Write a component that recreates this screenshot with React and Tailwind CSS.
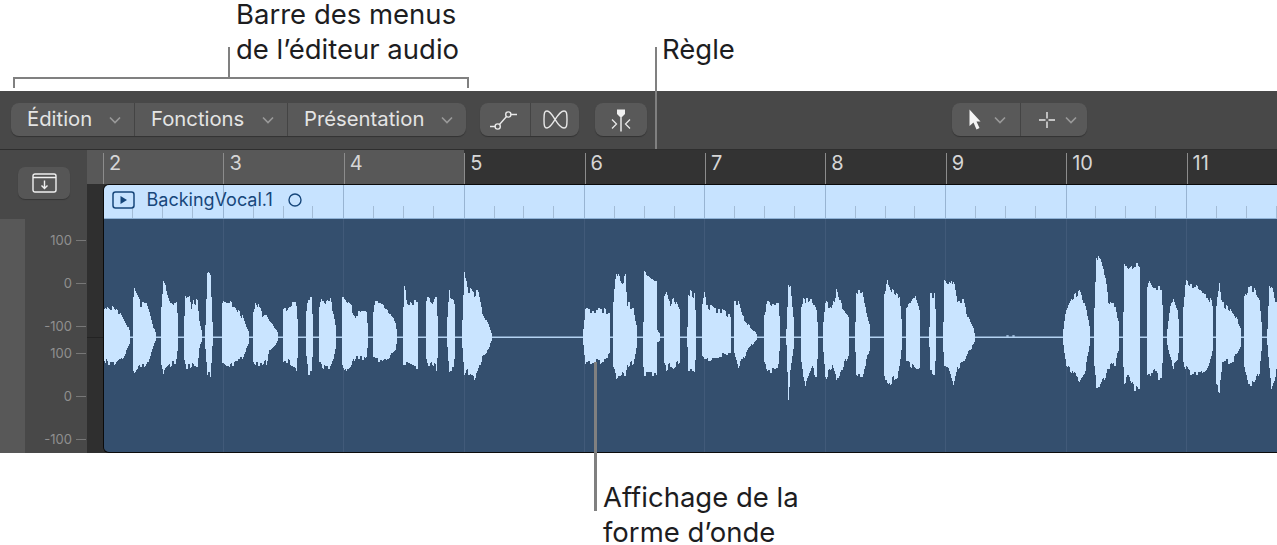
import React from "react";

const BLOBS = [
  [[104,27,22],[107,31,26],[113,28,26],[117,24,24],[120,24,22],[124,18,18],[127,12,12],[130,5,4]],
  [[133,40,34],[134,48,35],[137,40,33],[140,33,31],[146,32,28],[150,20,18],[153,10,8],[156,2,2]],
  [[161,30,28],[163,55,37],[166,48,30],[170,34,27],[176,32,25],[178,10,8]],
  [[184,20,25],[185,40,29],[189,42,30],[191,28,28],[193,36,30],[197,34,30],[199,15,10],[202,3,3]],
  [[205,12,12],[207,63,38],[210,60,38],[212,15,10],[213,3,3]],
  [[222,32,25],[224,35,26],[230,33,30],[236,28,25],[241,22,22],[245,12,14],[249,4,4]],
  [[253,25,25],[255,37,26],[258,32,26],[262,22,28],[266,24,25],[270,15,12],[275,8,8],[278,2,2]],
  [[283,28,25],[288,29,24],[292,33,28],[296,33,32],[298,6,6]],
  [[306,25,20],[308,40,36],[311,40,36],[313,10,8]],
  [[319,30,25],[321,37,29],[326,33,31],[330,36,31],[333,25,25],[336,8,8]],
  [[342,37,30],[344,36,36],[350,30,28],[355,22,20],[360,24,20],[366,26,22],[368,4,4]],
  [[373,25,20],[376,37,24],[380,37,24],[385,28,23],[390,22,18],[395,14,12],[397,3,3]],
  [[403,30,28],[404,48,29],[407,36,28],[412,34,28],[417,34,29],[418,5,5]],
  [[426,35,24],[427,39,28],[431,32,26],[436,42,31],[438,5,5]],
  [[447,20,10],[449,44,33],[453,38,32],[455,25,10]],
  [[462,16,12],[464,66,40],[467,48,35],[471,46,38],[474,43,41],[478,44,34],[482,26,22],[486,18,16],[490,8,6],[492,2,2]],
  [[583,8,8],[585,30,26],[592,26,25],[603,27,24],[610,22,18]],
  [[613,35,30],[616,65,40],[621,55,38],[625,60,40],[627,32,30],[633,30,25],[637,5,5]],
  [[643,15,30],[644,65,38],[650,58,38],[656,55,39],[657,6,6],[660,3,3]],
  [[664,38,28],[666,42,32],[670,33,28],[674,38,30],[679,26,25],[680,5,5]],
  [[687,10,10],[688,45,32],[694,42,32],[696,8,8]],
  [[702,30,20],[704,42,22],[706,32,22],[715,27,20],[724,24,18],[730,20,17],[731,4,4]],
  [[734,36,15],[738,34,31],[742,20,22],[748,12,12],[757,2,2]],
  [[764,25,25],[768,37,33],[772,32,32],[778,32,30],[780,5,5]],
  [[786,8,8],[788,53,62],[790,50,35],[794,10,8]],
  [[801,30,25],[803,42,40],[805,35,50],[811,38,30],[816,28,40],[818,5,5]],
  [[823,15,15],[825,34,40],[832,30,30],[836,45,43],[842,28,30],[849,18,15]],
  [[855,15,15],[856,46,36],[862,44,38],[866,25,24],[870,10,10]],
  [[884,45,38],[887,55,49],[892,45,43],[897,40,40],[899,42,30],[902,3,3]],
  [[906,28,25],[910,33,27],[915,42,33],[920,25,30]],
  [[929,10,10],[930,41,33],[934,41,36],[936,8,8]],
  [[943,15,15],[944,55,30],[948,50,32],[953,58,50],[957,35,30],[963,36,25],[968,18,15],[973,8,8],[975,2,2]],
  [[1063,8,8],[1066,28,28],[1072,38,35],[1080,45,45],[1086,28,28],[1090,5,5]],
  [[1094,30,30],[1096,82,48],[1100,75,48],[1105,60,42],[1108,37,30],[1115,33,28],[1119,8,8]],
  [[1123,25,30],[1124,76,45],[1128,68,40],[1133,72,50],[1139,70,52],[1140,10,8]],
  [[1147,50,38],[1150,55,40],[1153,50,32],[1158,50,40],[1161,50,40],[1163,10,8]],
  [[1167,8,8],[1170,30,20],[1173,39,29],[1177,30,25],[1179,6,6]],
  [[1183,30,25],[1185,55,30],[1190,50,35],[1195,50,36],[1200,44,38],[1207,42,30],[1213,30,10]],
  [[1216,30,50],[1219,55,53],[1222,32,27],[1228,30,25],[1233,24,22],[1241,8,8]],
  [[1244,40,30],[1247,47,45],[1253,48,47],[1259,38,35],[1262,5,5]],
  [[1267,8,8],[1269,48,30],[1271,50,53],[1277,30,30]],
];

function wavePath() {
  let d = "";
  let seed = 11;
  const rnd = () => {
    seed = (seed * 9301 + 49297) % 233280;
    return seed / 233280;
  };
  for (const blob of BLOBS) {
    let ju = 0;
    let jd = 0;
    for (let i = 0; i < blob.length - 1; i++) {
      const [x0, u0, d0] = blob[i];
      const [x1, u1, d1] = blob[i + 1];
      for (let x = x0; x < x1; x++) {
        const t = (x - x0) / (x1 - x0);
        const ub = u0 + (u1 - u0) * t;
        const db = d0 + (d1 - d0) * t;
        if (x % 2 === 0) {
          ju = (rnd() - 0.5) * Math.min(ub * 0.25, 7);
          jd = (rnd() - 0.5) * Math.min(db * 0.25, 7);
        }
        d += `M${x + 0.5} ${337 - Math.round(ub + ju)}V${337 + Math.round(db + jd)}`;
      }
    }
  }
  return d;
}
const WAVE = wavePath();
const BARS = [2, 3, 4, 5, 6, 7, 8, 9, 10, 11];

const Chevron = () => (
  <svg width="12" height="8" viewBox="0 0 12 8" fill="none" className="shrink-0">
    <path d="M1 1.500 6 6.500l5-5" stroke="#9a9a9a" strokeWidth="1.600" />
  </svg>
);

const MenuItem = ({ label, w, divider }) => (
  <div className={`flex items-center justify-between h-full ${w} pl-[16px] pr-[13px] ${divider ? "border-l border-[#444444]" : ""}`}>
    <span className="text-[20.3px] leading-none text-[#e4e4e4]">{label}</span>
    <Chevron />
  </div>
);

const BTN = "h-[33px] flex rounded-[8px] bg-[#595959] shadow-[0_1px_1px_rgba(0,0,0,0.3)]";

const AxisRow = ({ label, cls }) => (
  <div className={`h-[16px] flex items-center justify-end ${cls}`}>
    <span className="text-[13px] leading-none text-[#8f8f8f]">{label}</span>
    <div className="w-[10px] h-px bg-[#777777] ml-[4px]" />
  </div>
);

export default function App() {
  return (
    <div className="relative w-[1277px] h-[545px] bg-white overflow-hidden font-['Inter',sans-serif]">
      {/* top captions */}
      <div className="h-[91px] pl-[236px] pt-[1px] flex flex-col gap-[9px] text-[27.5px] leading-[26px] text-[#1d1d1f]">
        <div>Barre des menus</div>
        <div>de l’éditeur audio</div>
      </div>
      <div className="absolute left-[662px] top-[36px] text-[27.5px] leading-[26px] text-[#1d1d1f]">Règle</div>

      {/* editor */}
      <div className="h-[362px] bg-[#484848] flex flex-col">
        <div className="h-[59px] flex items-start pt-[12px] pl-[11px] pr-[190px] border-b border-[#2e2e2e] shrink-0">
          <div className={`${BTN} w-[455px]`}>
            <MenuItem label="Édition" w="w-[123px]" />
            <MenuItem label="Fonctions" w="w-[153px]" divider />
            <MenuItem label="Présentation" w="w-[179px]" divider />
          </div>
          <div className={`${BTN} w-[99px] ml-[14px]`}>
            <div className="w-[50px] flex items-center justify-center">
              <svg width="36" height="26" viewBox="0 0 36 26" fill="none" stroke="#e8e8e8" strokeWidth="1.400">
                <path d="M3 19.500h5.500M12.500 17.500l7-8M23.500 7.500H30" />
                <circle cx="10.700" cy="19.500" r="2.600" />
                <circle cx="21.300" cy="7.500" r="2.600" />
              </svg>
            </div>
            <div className="flex-1 border-l border-[#444444] flex items-center justify-center">
              <svg width="25" height="19" viewBox="0 0 25 19" fill="none" stroke="#e8e8e8" strokeWidth="1.400">
                <path d="M4 1C10 1 14 18 21 18C23.500 18 24 16 24 9.500C24 3 23.500 1 21 1C14 1 10 18 4 18C1.500 18 1 16 1 9.500C1 3 1.500 1 4 1Z" />
              </svg>
            </div>
          </div>
          <div className={`${BTN} w-[52px] ml-[16px] items-center justify-center`}>
            <svg width="24" height="26" viewBox="0 0 24 26" fill="none">
              <path d="M8 2.500h8V7l-3 3h-2L8 7Z" fill="#f0f0f0" />
              <path d="M12 9v15.500" stroke="#e8e8e8" strokeWidth="1.500" />
              <path d="M3 12.500 7.500 17 3 21.500M21 12.500 16.500 17l4.500 4.500" stroke="#e8e8e8" strokeWidth="1.300" />
            </svg>
          </div>
          <div className={`${BTN} w-[135px] ml-auto`}>
            <div className="w-[68px] flex items-center pl-[17px]">
              <svg width="12" height="21" viewBox="0 0 12 21">
                <path d="M.5.500V17l4-3.500 3 7 3-1.500-3-6.500h4Z" fill="#f5f5f5" />
              </svg>
              <div className="ml-[13px]">
                <Chevron />
              </div>
            </div>
            <div className="flex-1 border-l border-[#444444] flex items-center pl-[17px]">
              <svg width="18" height="18" viewBox="0 0 18 18" fill="none" stroke="#e8e8e8" strokeWidth="1.400">
                <path d="M1 9h6.500M10.500 9H17M9 1v6.500M9 10.500V17" />
              </svg>
              <div className="ml-[9px]">
                <Chevron />
              </div>
            </div>
          </div>
        </div>

        <div className="flex-1 flex min-h-0">
          {/* left gutter */}
          <div className="w-[87px] shrink-0 flex flex-col">
            <div className="h-[69px] pt-[17px] pl-[18px] shrink-0">
              <div className="w-[52px] h-[32px] rounded-[7px] bg-[#565656] flex items-center justify-center shadow-[0_1px_1px_rgba(0,0,0,0.25)]">
                <svg width="25" height="20" viewBox="0 0 25 20" fill="none" stroke="#f0f0f0" strokeWidth="1.400">
                  <rect x="1" y="1" width="23" height="18" rx="2" />
                  <path d="M1 4.500h23M12.500 7.500v7.500M9.500 12.500l3 3 3-3" />
                </svg>
              </div>
            </div>
            <div className="flex-1 flex min-h-0">
              <div className="w-[25px] bg-[#585858] shrink-0" />
              <div className="flex-1 pr-px">
                <AxisRow label="100" cls="mt-[13px]" />
                <AxisRow label="0" cls="mt-[27px]" />
                <AxisRow label="-100" cls="mt-[27px]" />
                <AxisRow label="100" cls="mt-[11px]" />
                <AxisRow label="0" cls="mt-[27px]" />
                <AxisRow label="-100" cls="mt-[27px]" />
              </div>
            </div>
          </div>

          {/* timeline */}
          <div className="flex-1 flex flex-col min-w-0 overflow-hidden">
            <div className="h-[34px] shrink-0 bg-[#333333] flex">
              <div className="w-[16px] bg-[#585858] shrink-0" />
              {BARS.map((b, i) => (
                <div key={b} className={`w-[120.4px] shrink-0 pt-[3px] ${i < 3 ? "bg-[#585858]" : ""}`}>
                  <div className="h-full border-l border-[#8c8c8c] pl-[5px] text-[20px] leading-[20px] text-[#d6d6d6]">{b}</div>
                </div>
              ))}
            </div>
            <div className="flex-1 flex min-h-0 bg-[#2f2f2f] relative">
              <div className="absolute left-0 w-[16px] top-[153px] h-px bg-[#232323]" />
              <div className="w-[16px] shrink-0" />
              <div className="relative flex-1 rounded-l-[6px] border-y-[1.5px] border-l-[1.5px] border-[#0b0b0b] flex flex-col overflow-hidden">
                <div className="relative h-[34px] shrink-0 bg-[#c7e3ff] border-b border-[#8fb2d6] flex -ml-[1.5px]">
                  {BARS.map((b, i) => (
                    <div key={b} className={`w-[120.4px] shrink-0 flex ${i > 0 ? "border-l border-[#98b4d2]" : ""}`}>
                      {[0, 1, 2, 3].map((k) => (
                        <div key={k} className="flex-1 flex items-end">
                          {k > 0 ? <div className="w-px h-[12px] bg-[#a3bcd6] -ml-px" /> : null}
                        </div>
                      ))}
                    </div>
                  ))}
                  <div className="absolute left-[9px] top-[6px] flex items-center">
                    <svg width="23" height="18" viewBox="0 0 23 18" fill="none">
                      <rect x="1" y="1" width="21" height="16" rx="2.500" stroke="#17477b" strokeWidth="1.500" />
                      <path d="M8.500 5v8l6.500-4Z" fill="#17477b" />
                    </svg>
                    <span className="ml-[12px] text-[18px] leading-none text-[#17477b]">BackingVocal.1</span>
                    <svg width="14" height="14" viewBox="0 0 14 14" fill="none" className="ml-[15px]">
                      <circle cx="7" cy="7" r="6" stroke="#17477b" strokeWidth="1.400" />
                    </svg>
                  </div>
                </div>
                <div className="relative flex-1 bg-[#344f6e] flex -ml-[1.5px]">
                  {BARS.map((b, i) => (
                    <div key={b} className={`w-[120.4px] shrink-0 ${i > 0 ? "border-l border-[#415a79]" : ""}`} />
                  ))}
                  <svg className="absolute left-0 top-0" width="1174" height="234" viewBox="103 219 1174 234" fill="none">
                    <path d="M104 337.250H1277" stroke="#b4d3f2" strokeWidth="1.500" />
                    <path d="M1007 337v-2M1008 337v-2M1013 337v-2M1014 337v-2" stroke="#b4d3f2" />
                    <path d={WAVE} stroke="#c9e4ff" strokeWidth="1" shapeRendering="crispEdges" />
                  </svg>
                </div>
              </div>
            </div>
          </div>
        </div>
      </div>

      {/* bottom caption */}
      <div className="h-[92px] pl-[603px] pt-[31px] flex flex-col gap-[9px] text-[27.5px] leading-[26px] text-[#1d1d1f]">
        <div>Affichage de la</div>
        <div>forme d’onde</div>
      </div>

      {/* callout lines */}
      <div className="absolute left-[13px] top-[77px] w-[456px] h-[11px] border-x-2 border-t-2 border-[#808080]" />
      <div className="absolute left-[228px] top-[47px] w-[2px] h-[30px] bg-[#808080]" />
      <div className="absolute left-[655px] top-[47px] w-[2px] h-[102px] bg-[#808080]" />
      <div className="absolute left-[594px] top-[362px] w-[3px] h-[149px] bg-[#808080]" />
    </div>
  );
}
